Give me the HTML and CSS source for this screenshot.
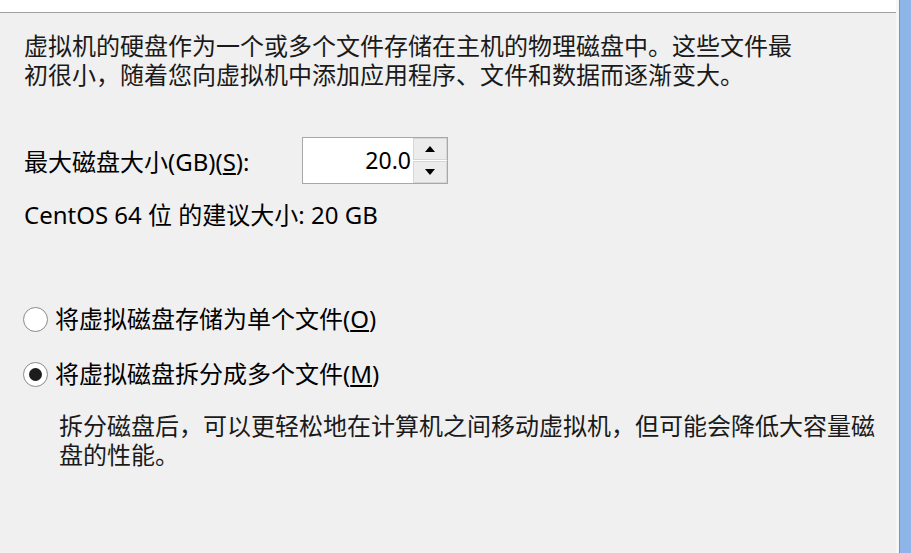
FILE: index.html
```html
<!DOCTYPE html>
<html lang="zh-CN">
<head>
<meta charset="utf-8">
<title>指定磁盘容量</title>
<link rel="stylesheet" href="styles.css">
</head>
<body>
<div class="window">
  <div class="panel">
    <div class="header"></div>
    <div class="content">
      <p class="intro">虚拟机的硬盘作为一个或多个文件存储在主机的物理磁盘中。这些文件最<br>初很小，随着您向虚拟机中添加应用程序、文件和数据而逐渐变大。</p>
      <div class="size-row">
        <label class="size-label">最大磁盘大小(GB)(<u>S</u>):</label>
        <div class="spin">
          <div class="spin-value">20.0</div>
          <div class="spin-buttons">
            <div class="spin-btn"><span class="tri up"></span></div>
            <div class="spin-btn"><span class="tri down"></span></div>
          </div>
        </div>
      </div>
      <p class="recommend">CentOS 64 位 的建议大小: 20 GB</p>
      <div class="options">
        <div class="radio-row">
          <span class="radio"></span>
          <span class="radio-label">将虚拟磁盘存储为单个文件(<u>O</u>)</span>
        </div>
        <div class="radio-row">
          <span class="radio checked"></span>
          <span class="radio-label">将虚拟磁盘拆分成多个文件(<u>M</u>)</span>
        </div>
        <p class="note">拆分磁盘后，可以更轻松地在计算机之间移动虚拟机，但可能会降低大容量磁<br>盘的性能。</p>
      </div>
    </div>
  </div>
  <div class="edge"></div>
</div>
</body>
</html>
```

FILE: styles.css
```css
html, body {
  margin: 0;
  padding: 0;
  height: 100%;
  overflow: hidden;
}
body {
  font-family: "Noto Sans", "Noto Sans CJK SC", sans-serif;
  color: #000;
  background: #f0f0f0;
}
.window {
  display: flex;
  height: 553px;
}
.panel {
  flex: 1;
  display: flex;
  flex-direction: column;
  background: #f0f0f0;
  border-right: 3px solid #f7f7f7;
}
.header {
  height: 12px;
  background: #ffffff;
  border-bottom: 1px solid #a0a0a0;
}
.edge {
  width: 11px;
  background: #8db5e8;
  border-left: 1px solid #6f97cc;
}
.content {
  padding: 17px 0 0 24px;
}
.intro {
  margin: 0;
  font-size: 24px;
  line-height: 29px;
  font-family: "Noto Sans CJK SC", sans-serif;
  color: #1a1a1a;
}
.size-row {
  display: flex;
  align-items: center;
  margin-top: 49px;
}
.size-label {
  font-size: 24px;
  width: 278px;
}
.spin {
  display: flex;
  width: 144px;
  height: 45px;
  border: 1px solid #a8a8a8;
  background: #ffffff;
}
.spin-value {
  flex: 1;
  text-align: right;
  font-size: 23px;
  line-height: 45px;
  padding-right: 2px;
}
.spin-buttons {
  width: 34px;
  display: flex;
  flex-direction: column;
  gap: 1px;
  background: #ffffff;
}
.spin-btn {
  flex: 1;
  display: flex;
  align-items: center;
  justify-content: center;
  background: #ececec;
  border: 1px solid #d6d6d6;
}
.tri {
  width: 0;
  height: 0;
  border-left: 5px solid transparent;
  border-right: 5px solid transparent;
}
.tri.up {
  border-bottom: 6px solid #000;
}
.tri.down {
  border-top: 6px solid #000;
}
.recommend {
  margin: 14px 0 0;
  font-size: 24px;
  line-height: 34px;
}
.options {
  margin-top: 70px;
}
.radio-row {
  display: flex;
  align-items: center;
  gap: 7px;
  margin-left: -1px;
  height: 34px;
  margin-bottom: 21px;
  font-size: 24px;
}
.radio {
  width: 23px;
  height: 23px;
  border: 1px solid #8a8a8a;
  border-radius: 50%;
  background: #fff;
  display: flex;
  align-items: center;
  justify-content: center;
}
.radio.checked::after {
  content: "";
  width: 13px;
  height: 13px;
  border-radius: 50%;
  background: #1c1c1c;
}
.radio-label {
  line-height: 34px;
}
.note {
  margin: -2px 0 0 35px;
  font-size: 24px;
  line-height: 29px;
  font-family: "Noto Sans CJK SC", sans-serif;
  color: #1a1a1a;
}
```
